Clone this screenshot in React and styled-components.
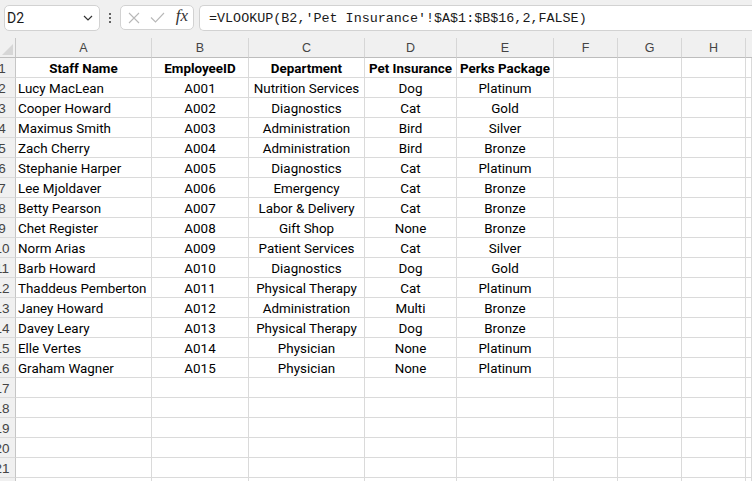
import React from "react";
import styled, { createGlobalStyle } from "styled-components";

const GlobalStyle = createGlobalStyle`
  html, body {
    margin: 0;
    padding: 0;
    background: #ffffff;
    font-family: Roboto, "Liberation Sans", Arial, sans-serif;
    overflow: hidden;
  }
`;

const columns = [
  { key: "A", width: 136 },
  { key: "B", width: 97 },
  { key: "C", width: 116 },
  { key: "D", width: 92 },
  { key: "E", width: 97 },
  { key: "F", width: 64 },
  { key: "G", width: 64 },
  { key: "H", width: 64 },
];

const header = ["Staff Name", "EmployeeID", "Department", "Pet Insurance", "Perks Package"];

const staff = [
  ["Lucy MacLean", "A001", "Nutrition Services", "Dog", "Platinum"],
  ["Cooper Howard", "A002", "Diagnostics", "Cat", "Gold"],
  ["Maximus Smith", "A003", "Administration", "Bird", "Silver"],
  ["Zach Cherry", "A004", "Administration", "Bird", "Bronze"],
  ["Stephanie Harper", "A005", "Diagnostics", "Cat", "Platinum"],
  ["Lee Mjoldaver", "A006", "Emergency", "Cat", "Bronze"],
  ["Betty Pearson", "A007", "Labor & Delivery", "Cat", "Bronze"],
  ["Chet Register", "A008", "Gift Shop", "None", "Bronze"],
  ["Norm Arias", "A009", "Patient Services", "Cat", "Silver"],
  ["Barb Howard", "A010", "Diagnostics", "Dog", "Gold"],
  ["Thaddeus Pemberton", "A011", "Physical Therapy", "Cat", "Platinum"],
  ["Janey Howard", "A012", "Administration", "Multi", "Bronze"],
  ["Davey Leary", "A013", "Physical Therapy", "Dog", "Bronze"],
  ["Elle Vertes", "A014", "Physician", "None", "Platinum"],
  ["Graham Wagner", "A015", "Physician", "None", "Platinum"],
];

const TOTAL_ROWS = 22;

const gridTemplate = `16px ${columns.map((c) => `${c.width}px`).join(" ")} 1fr`;

export default function App() {
  const rows = [header, ...staff];
  while (rows.length < TOTAL_ROWS) rows.push([]);

  return (
    <Page>
      <GlobalStyle />
      <Toolbar>
        <NameBox>
          <span>D2</span>
          <svg width="10" height="6" viewBox="0 0 10 6">
            <path d="M1 1l4 4 4-4" fill="none" stroke="#333" strokeWidth="1.2" />
          </svg>
        </NameBox>
        <Dots>
          <i />
          <i />
          <i />
        </Dots>
        <FxBox>
          <svg width="12" height="12" viewBox="0 0 12 12">
            <path d="M1 1l10 10M11 1L1 11" stroke="#b8b8b8" strokeWidth="1.1" />
          </svg>
          <svg width="15" height="11" viewBox="0 0 15 11">
            <path d="M1 5.5l4.5 4.5L14 1" fill="none" stroke="#b8b8b8" strokeWidth="1.1" />
          </svg>
          <Fx>fx</Fx>
        </FxBox>
        <FormulaBox>=VLOOKUP(B2,'Pet Insurance'!$A$1:$B$16,2,FALSE)</FormulaBox>
      </Toolbar>

      <Gap />

      <Sheet>
        <Corner>
          <svg width="11" height="11" viewBox="0 0 11 11">
            <path d="M11 0V11H0Z" fill="#d6d6d6" />
          </svg>
        </Corner>
        {columns.map((c) => (
          <ColHead key={c.key}>{c.key}</ColHead>
        ))}
        <ColHead $last />

        {rows.map((row, r) => (
          <React.Fragment key={r}>
            <RowHead>
              <span>{r + 1}</span>
            </RowHead>
            {columns.map((c, i) => (
              <Cell key={c.key} $bold={r === 0} $align={i === 0 && r > 0 ? "left" : "center"}>
                {row[i] || ""}
              </Cell>
            ))}
            <Cell />
          </React.Fragment>
        ))}
      </Sheet>
    </Page>
  );
}

const Page = styled.div`
  width: 752px;
  height: 481px;
  overflow: hidden;
  background: #ffffff;
`;

const Toolbar = styled.div`
  display: flex;
  align-items: stretch;
  height: 26px;
  padding-top: 5px;
  background: #f0f0f0;
`;

const NameBox = styled.div`
  box-sizing: border-box;
  width: 96px;
  height: 26px;
  margin-left: 4px;
  padding: 0 6px 0 2px;
  display: flex;
  align-items: center;
  justify-content: space-between;
  background: #fff;
  border: 1px solid #d2d2d2;
  border-radius: 5px;
  font-size: 14px;
  color: #1a1a1a;
`;

const Dots = styled.div`
  width: 20px;
  display: flex;
  flex-direction: column;
  align-items: center;
  justify-content: center;
  gap: 2px;

  i {
    width: 2px;
    height: 2px;
    background: #333;
    border-radius: 1px;
  }
`;

const FxBox = styled.div`
  box-sizing: border-box;
  width: 74px;
  height: 25px;
  padding: 0 5px 0 7px;
  display: flex;
  align-items: center;
  justify-content: space-between;
  background: #fff;
  border: 1px solid #d2d2d2;
  border-radius: 5px;
`;

const Fx = styled.span`
  font-family: "Liberation Serif", "Times New Roman", serif;
  font-style: italic;
  font-size: 17px;
  color: #333;
  margin-top: -3px;
`;

const FormulaBox = styled.div`
  flex: 1;
  box-sizing: border-box;
  height: 26px;
  margin-left: 5px;
  padding-left: 9px;
  display: flex;
  align-items: center;
  background: #fff;
  border: 1px solid #d2d2d2;
  border-right: none;
  border-top-left-radius: 5px;
  border-bottom-left-radius: 5px;
  font-family: "Liberation Mono", "Courier New", monospace;
  font-size: 13.4px;
  color: #1a1a1a;
  white-space: nowrap;
`;

const Gap = styled.div`
  height: 7px;
  background: #f0f0f0;
`;

const Sheet = styled.div`
  display: grid;
  grid-template-columns: ${gridTemplate};
  grid-auto-rows: 20px;
`;

const Corner = styled.div`
  box-sizing: border-box;
  background: #f0f0f0;
  border-right: 1px solid #c6c6c6;
  border-bottom: 1px solid #bdbdbd;
  display: flex;
  align-items: flex-end;
  justify-content: flex-end;
  padding: 0 2px 2px 0;
`;

const ColHead = styled.div`
  box-sizing: border-box;
  background: #f0f0f0;
  border-right: ${(p) => (p.$last ? "none" : "1px solid #d6d6d6")};
  border-bottom: 1px solid #bdbdbd;
  display: flex;
  align-items: center;
  justify-content: center;
  font-family: "Liberation Sans", Arial, sans-serif;
  font-size: 12.5px;
  color: #444;
`;

/* the row numbers are wider than the visible header strip, so they sit
   centred a little left of it and get clipped */
const RowHead = styled.div`
  box-sizing: border-box;
  background: #f0f0f0;
  border-right: 1px solid #c6c6c6;
  border-bottom: 1px solid #dadada;
  padding: 1px 11px 0 0;
  display: flex;
  align-items: center;
  justify-content: center;
  overflow: hidden;
  font-family: "Liberation Sans", Arial, sans-serif;
  font-size: 13.5px;
  color: #444;

  span {
    white-space: nowrap;
  }
`;

const Cell = styled.div`
  box-sizing: border-box;
  border-right: 1px solid #dadada;
  border-bottom: 1px solid #dadada;
  display: flex;
  align-items: center;
  justify-content: ${(p) => (p.$align === "left" ? "flex-start" : "center")};
  padding: 1px 2px 0;
  font-size: 13.4px;
  font-weight: ${(p) => (p.$bold ? 700 : 400)};
  color: #000;
  white-space: nowrap;
  overflow: hidden;
`;
